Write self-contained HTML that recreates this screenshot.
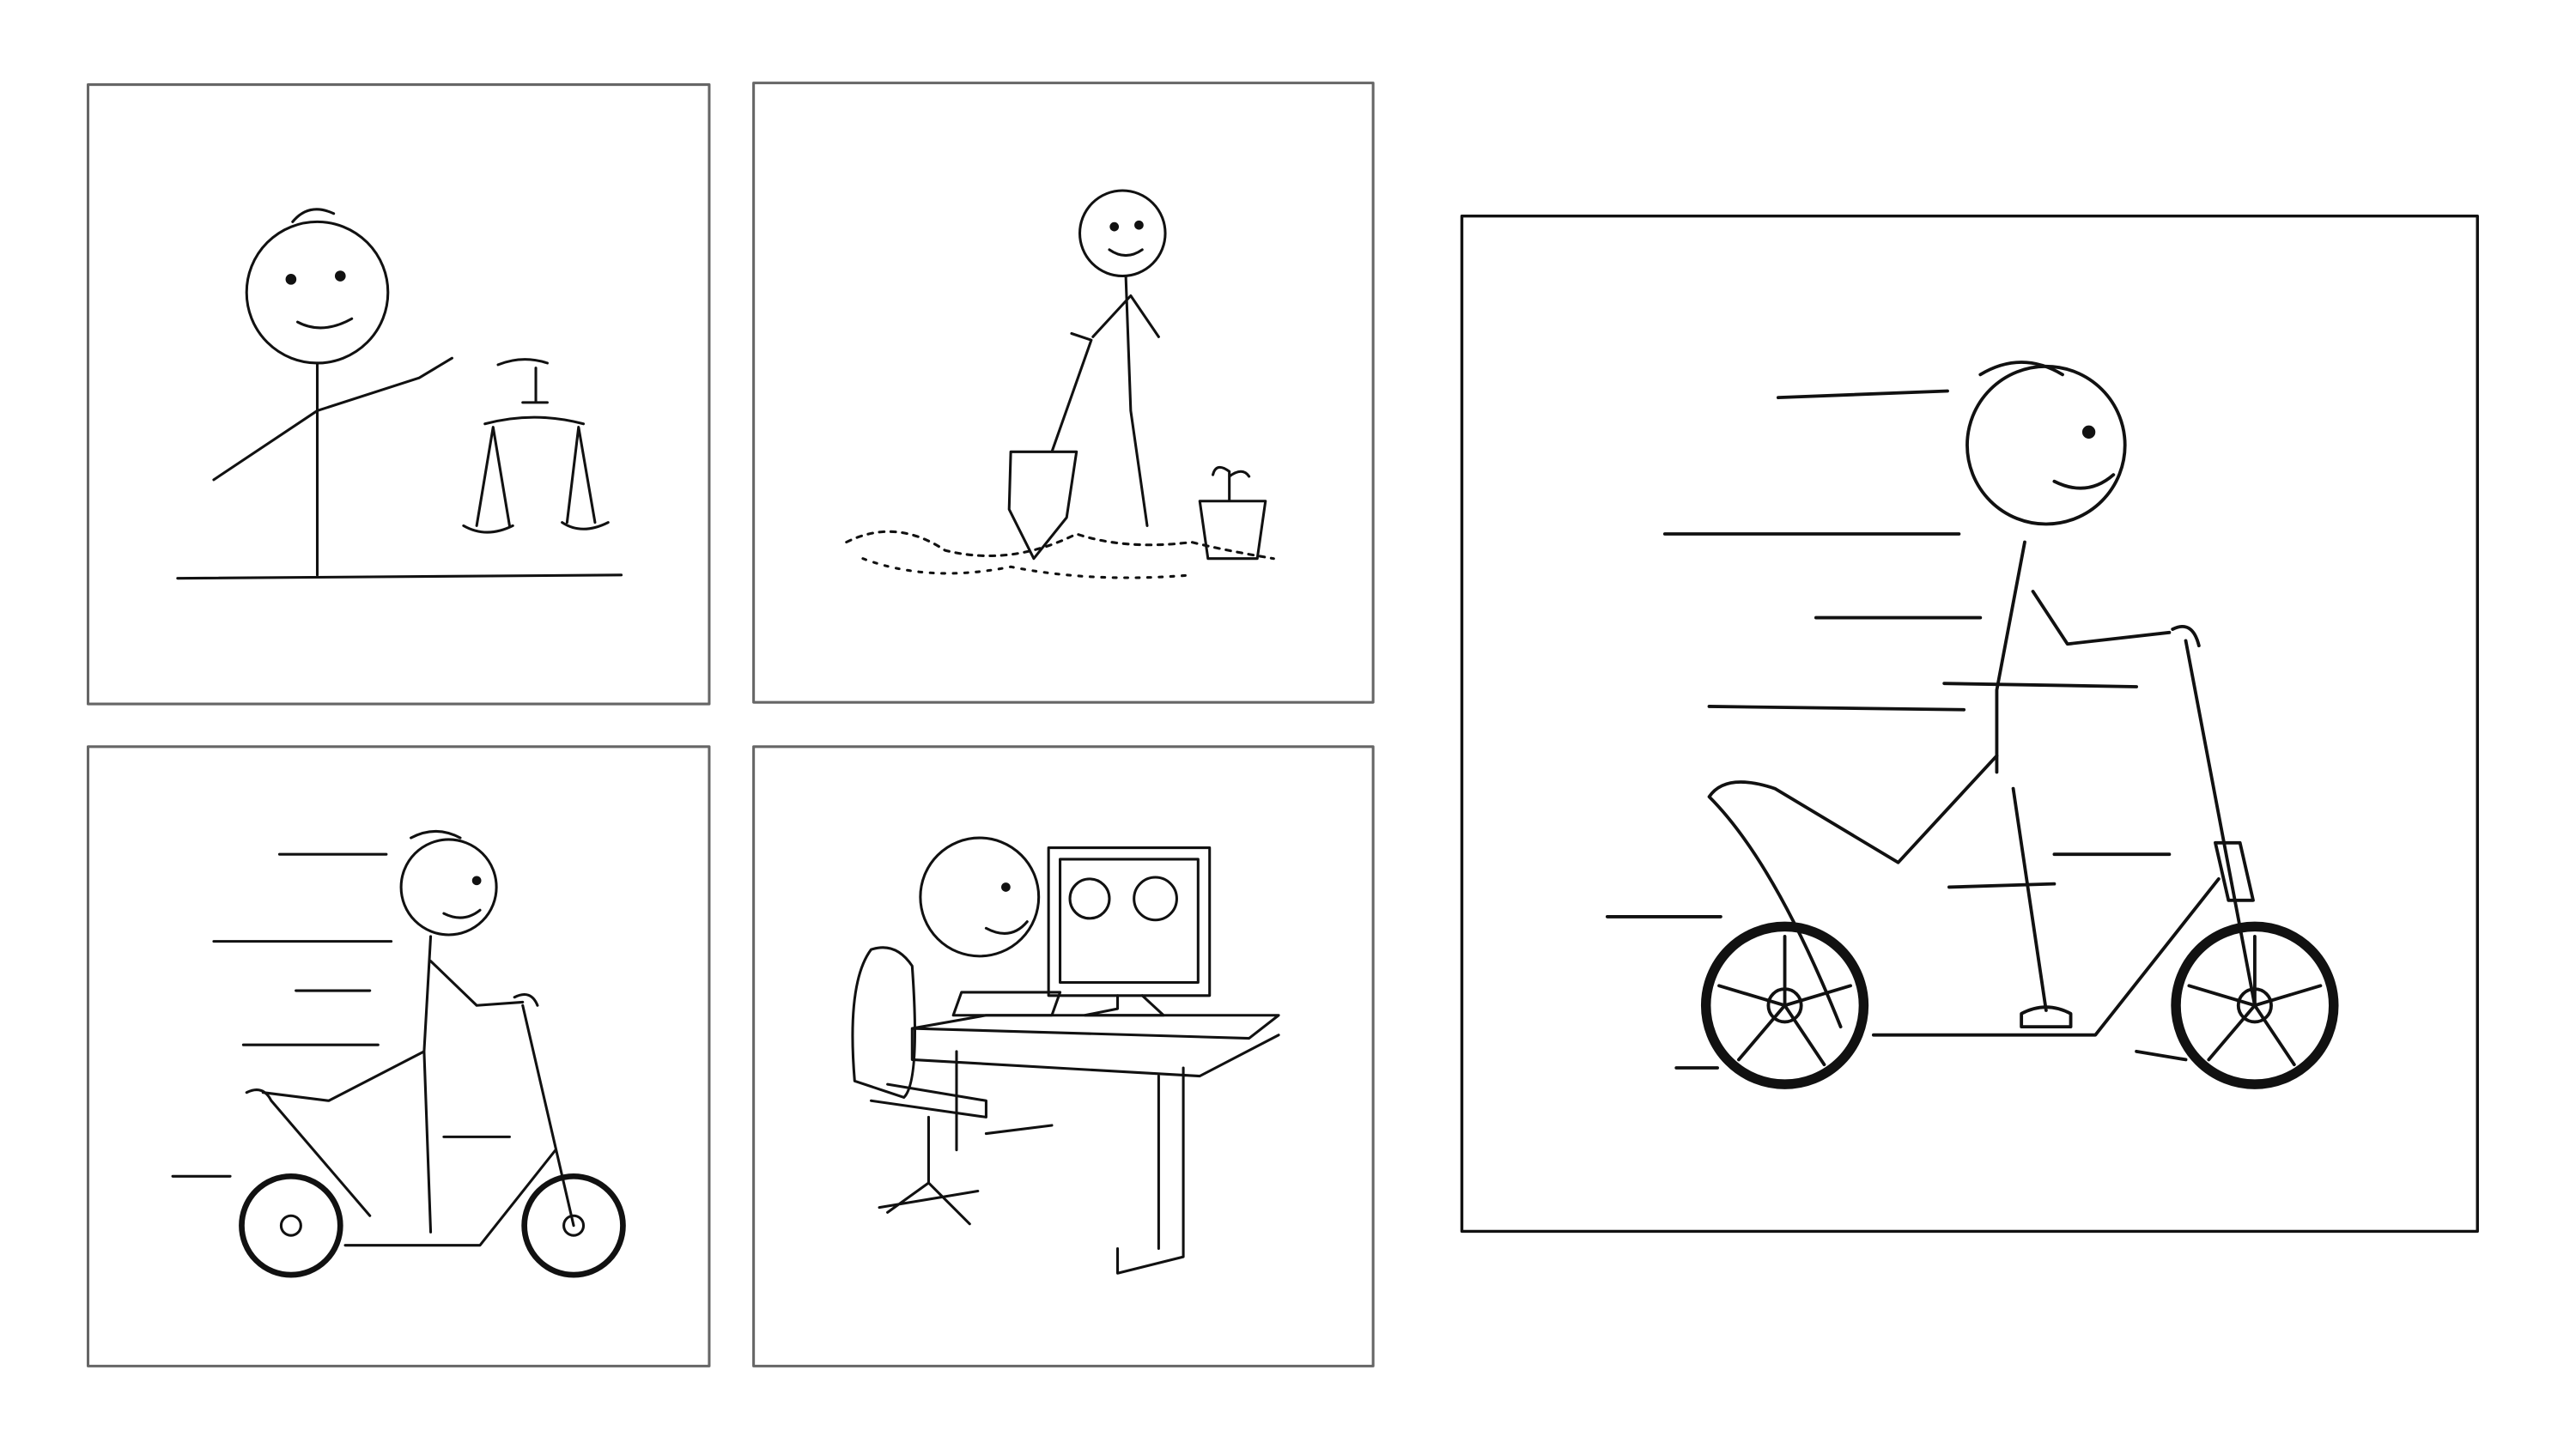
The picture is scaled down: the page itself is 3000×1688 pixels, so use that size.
<!DOCTYPE html>
<html><head><style>
html,body{margin:0;padding:0;background:#fff;width:3000px;height:1688px;overflow:hidden}
svg{position:absolute;left:0;top:0}
</style></head><body>
<svg width="3000" height="1688" viewBox="0 0 1567.4 882" fill="none" stroke="#111" stroke-width="1.6" stroke-linecap="round" stroke-linejoin="round">
<!-- boxes -->
<g stroke="#666" stroke-width="1.6">
<rect x="53.5" y="51.5" width="378" height="377"/>
<rect x="458.5" y="50.5" width="377" height="377"/>
<rect x="53.5" y="454.5" width="378" height="377"/>
<rect x="458.5" y="454.5" width="377" height="377"/>
</g>
<rect x="889.5" y="131.5" width="618" height="618" stroke="#111" stroke-width="1.8"/>

<!-- panel1: scales -->
<g>
<circle cx="193" cy="178" r="43"/>
<path d="M178 135 q10-12 25-5"/>
<circle cx="177" cy="170" r="2.5" fill="#111"/><circle cx="207" cy="168" r="2.5" fill="#111"/>
<path d="M181 196 q15 8 33-2"/>
<path d="M193 221 L193 350"/>
<path d="M193 250 L130 292 M193 250 L255 230 l20-12"/>
<path d="M108 352 L378 350"/>
<path d="M303 222 q15-6 30-1 M326 224 L326 245 M318 245 L333 245 M295 258 q30-8 60 0 M290 320 L300 260 L310 320 M282 320 q14 8 30 0 M345 318 L352 260 L362 318 M342 318 q12 8 28 0"/>
</g>

<!-- panel2: digging -->
<g>
<circle cx="683" cy="142" r="26"/>
<circle cx="678" cy="138" r="2" fill="#111"/><circle cx="693" cy="137" r="2" fill="#111"/>
<path d="M675 152 q10 7 20 0"/>
<path d="M685 168 L688 250 L698 320 M688 180 L665 205 M688 180 L705 205"/>
<path d="M652 203 l12 4 L640 275 M615 275 l40 0 -6 40 -20 25 -15-30 z"/>
<path d="M730 305 l40 0 -5 35 -30 0 z M748 305 l0-18 q-8-6-10 2 M748 290 q8-6 12 0"/>
<path d="M515 330 q30-15 60 5 q40 10 80-10 q30 10 70 5 q20 5 50 10" stroke-dasharray="3 4"/>
<path d="M525 340 q40 15 90 5 q50 10 110 5" stroke-dasharray="2 5"/>
</g>

<!-- scooter small -->
<g>
<circle cx="273" cy="540" r="29"/>
<circle cx="290" cy="536" r="2" fill="#111"/>
<path d="M270 556 q12 6 22-2 M250 510 q15-8 30 0"/>
<path d="M262 570 L258 640 L262 750 M262 585 L290 612 L318 610 M258 640 L200 670 L160 665"/>
<path d="M150 665 q10-5 15 5 l60 70"/>
<circle cx="177" cy="746" r="30" stroke-width="3.5"/><circle cx="177" cy="746" r="6"/>
<circle cx="349" cy="746" r="30" stroke-width="3.5"/><circle cx="349" cy="746" r="6"/>
<path d="M210 758 L292 758 L338 700 M318 612 L349 746 M313 607 q10-5 14 5"/>
<path d="M130 573 L238 573 M170 520 L235 520 M180 603 L225 603 M148 636 L230 636 M105 716 L140 716 M270 692 L310 692"/>
</g>

<!-- desk panel -->
<g>
<circle cx="596" cy="546" r="36"/>
<circle cx="612" cy="540" r="2" fill="#111"/>
<path d="M600 565 q15 8 25-4"/>
<rect x="638" y="516" width="98" height="90"/><rect x="645" y="523" width="84" height="75"/>
<circle cx="663" cy="547" r="12"/><circle cx="703" cy="547" r="13"/>
<path d="M680 606 L680 614 L660 618 L708 618 L695 606"/>
<path d="M585 604 l60 0 -5 14 -60 0 z"/>
<path d="M555 626 L600 618 L778 618 L760 632 L555 626 M555 626 L555 645 L730 655 L778 630 M705 655 L705 760 M720 650 L720 765 L680 775 L680 760 M582 640 L582 700 M600 690 L640 685"/>
<path d="M530 578 q-15 20-10 80 l30 10 q10-10 5-80 q-10-15-25-10 M530 670 L600 680 L600 670 L540 660 M565 680 L565 720 M535 735 L595 725 M565 720 L540 738 M565 720 L590 745"/>
</g>

<!-- large scooter -->
<g stroke-width="2">
<circle cx="1245" cy="271" r="48"/>
<circle cx="1271" cy="263" r="3" fill="#111"/>
<path d="M1250 293 q20 10 36-4 M1205 228 q25-15 50 0"/>
<path d="M1232 330 L1215 420 L1215 470 M1225 480 L1245 615 M1237 360 L1258 392 L1320 385"/>
<path d="M1215 460 L1155 525 L1080 480 q-30-10-40 5 q40 40 80 140"/>
<circle cx="1086" cy="612" r="48" stroke-width="6"/><circle cx="1086" cy="612" r="10"/>
<path d="M1086 612 L1086 570 M1086 612 L1126 600 M1086 612 L1110 648 M1086 612 L1058 645 M1086 612 L1046 600"/>
<circle cx="1372" cy="612" r="48" stroke-width="6"/><circle cx="1372" cy="612" r="10"/>
<path d="M1372 612 L1372 570 M1372 612 L1412 600 M1372 612 L1396 648 M1372 612 L1344 645 M1372 612 L1332 600"/>
<path d="M1140 630 L1275 630 L1350 535 M1330 390 L1372 612 M1322 383 q12-6 16 10 M1348 513 l15 0 8 35 -15 0 z M1230 617 q15-8 30 0 l0 8 -30 0 z"/>
<path d="M1082 242 L1185 238 M1013 325 L1192 325 M1105 376 L1205 376 M1183 416 L1300 418 M1040 430 L1195 432 M1250 520 L1320 520 M978 558 L1047 558 M1186 540 L1250 538 M1020 650 L1045 650 M1300 640 L1330 645"/>
</g>
</svg>
</body></html>
